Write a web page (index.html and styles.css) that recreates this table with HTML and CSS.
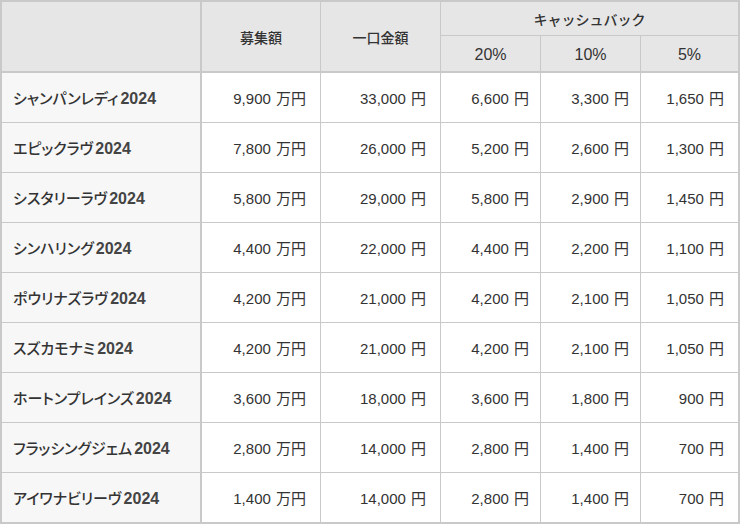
FILE: index.html
```html
<!DOCTYPE html>
<html lang="ja">
<head>
<meta charset="utf-8">
<link rel="stylesheet" href="styles.css">
</head>
<body>
<table class="cb">
  <colgroup>
    <col class="c-name"><col class="c-amt"><col class="c-unit"><col class="c-p"><col class="c-p"><col class="c-p5">
  </colgroup>
  <thead>
    <tr class="h1">
      <th rowspan="2" class="corner"></th>
      <th rowspan="2">募集額</th>
      <th rowspan="2">一口金額</th>
      <th colspan="3">キャッシュバック</th>
    </tr>
    <tr class="h2">
      <th class="pct">20%</th>
      <th class="pct">10%</th>
      <th class="pct">5%</th>
    </tr>
  </thead>
  <tbody>
    <tr><th>シャンパンレディ<span class="yr">2024</span></th><td>9,900 万円</td><td>33,000 円</td><td>6,600 円</td><td>3,300 円</td><td>1,650 円</td></tr>
    <tr><th>エピックラヴ<span class="yr">2024</span></th><td>7,800 万円</td><td>26,000 円</td><td>5,200 円</td><td>2,600 円</td><td>1,300 円</td></tr>
    <tr><th>シスタリーラヴ<span class="yr">2024</span></th><td>5,800 万円</td><td>29,000 円</td><td>5,800 円</td><td>2,900 円</td><td>1,450 円</td></tr>
    <tr><th>シンハリング<span class="yr">2024</span></th><td>4,400 万円</td><td>22,000 円</td><td>4,400 円</td><td>2,200 円</td><td>1,100 円</td></tr>
    <tr><th>ポウリナズラヴ<span class="yr">2024</span></th><td>4,200 万円</td><td>21,000 円</td><td>4,200 円</td><td>2,100 円</td><td>1,050 円</td></tr>
    <tr><th>スズカモナミ<span class="yr">2024</span></th><td>4,200 万円</td><td>21,000 円</td><td>4,200 円</td><td>2,100 円</td><td>1,050 円</td></tr>
    <tr><th>ホートンプレインズ<span class="yr">2024</span></th><td>3,600 万円</td><td>18,000 円</td><td>3,600 円</td><td>1,800 円</td><td>900 円</td></tr>
    <tr><th>フラッシングジェム<span class="yr">2024</span></th><td>2,800 万円</td><td>14,000 円</td><td>2,800 円</td><td>1,400 円</td><td>700 円</td></tr>
    <tr><th>アイワナビリーヴ<span class="yr">2024</span></th><td>1,400 万円</td><td>14,000 円</td><td>2,800 円</td><td>1,400 円</td><td>700 円</td></tr>
  </tbody>
</table>
</body>
</html>
```
FILE: styles.css
```css
html, body {
  margin: 0;
  padding: 0;
  background: #ffffff;
}
body {
  font-family: "Liberation Sans", "Noto Sans CJK JP", sans-serif;
  color: #333333;
  font-size: 15px;
}
.cb {
  border-collapse: separate;
  border-spacing: 0;
  width: 740px;
  table-layout: fixed;
  border: 2px solid #c9c9c9;
  box-sizing: border-box;
}
.c-name { width: 200px; }
.c-amt { width: 119px; }
.c-unit { width: 120px; }
.c-p { width: 100px; }
.c-p5 { width: 97px; }

.cb th, .cb td {
  padding: 0;
  border-right: 1px solid #c9c9c9;
  border-bottom: 1px solid #c9c9c9;
}
.cb tr > :last-child { border-right: none; }
.cb tbody tr:last-child > * { border-bottom: none; }

.cb thead th {
  background: #e6e6e6;
  font-weight: 500;
  text-align: center;
  font-size: 14px;
  color: #333;
}
.cb thead .corner { border-right: 2px solid #c9c9c9; }
.cb .h1 th { height: 33px; }
.cb .h2 th { height: 32px; }
.cb thead th[rowspan] { border-bottom: 2px solid #c9c9c9; }
.cb .h2 th { border-bottom: 2px solid #c9c9c9; }
.cb .h1 th[colspan] { border-right: none; }
.cb .h2 th:last-child { border-right: none; }
.cb .pct { font-weight: 400; font-size: 16px; padding-top: 3px; }

.cb tbody th {
  background: #f7f7f7;
  text-align: left;
  padding-left: 11px;
  font-weight: 500;
  font-size: 15px;
  font-feature-settings: "palt";
  border-right: 2px solid #c9c9c9;
  height: 49px;
}
.cb .yr {
  font-size: 16px;
  font-weight: 600;
  margin-left: 2px;
  color: #444444;
}
.cb tbody td {
  text-align: right;
  padding-right: 14px;
  font-size: 15px;
  height: 49px;
  word-spacing: 1px;
}
.cb tbody td:nth-child(4),
.cb tbody td:nth-child(5) { padding-right: 11px; }
```
